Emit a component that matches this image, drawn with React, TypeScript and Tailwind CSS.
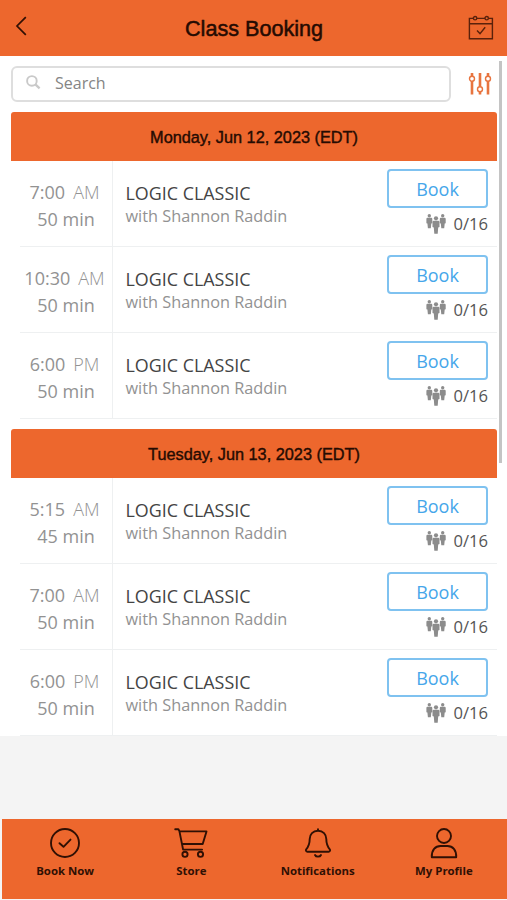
import type { ReactNode } from "react";

interface ClassSlot {
  time: string;
  period: string;
  duration: string;
}

interface DayProps {
  title: string;
  slots: ClassSlot[];
  className?: string;
}

const MONDAY: ClassSlot[] = [
  { time: "7:00", period: "AM", duration: "50 min" },
  { time: "10:30", period: "AM", duration: "50 min" },
  { time: "6:00", period: "PM", duration: "50 min" },
];

const TUESDAY: ClassSlot[] = [
  { time: "5:15", period: "AM", duration: "45 min" },
  { time: "7:00", period: "AM", duration: "50 min" },
  { time: "6:00", period: "PM", duration: "50 min" },
];

function BackIcon() {
  return (
    <svg width="12" height="20" viewBox="0 0 12 20" fill="none" stroke="#301004" strokeWidth="1.7">
      <path d="M10.8 1.2 2 10l8.8 8.8" />
    </svg>
  );
}

function CalendarIcon() {
  return (
    <svg width="26" height="26" viewBox="0 0 26 26" fill="none" stroke="#5a210b" strokeWidth="1.4">
      <path d="M5.2 3.4H1.4v20.4h23V3.4h-3.8M9 3.4h8M1.4 8.7h23" />
      <circle cx="7.1" cy="3.2" r="1.7" />
      <circle cx="18.7" cy="3.2" r="1.7" />
      <path d="m9 15.6 3 3 5.2-6.4" />
    </svg>
  );
}

function SearchIcon() {
  return (
    <svg width="15" height="15" viewBox="0 0 15 15" fill="none" stroke="#c9c9c9">
      <circle cx="5.9" cy="5.9" r="4.8" strokeWidth="1.9" />
      <path d="m9.4 9.4 4.2 4" strokeWidth="2.3" />
    </svg>
  );
}

function FilterIcon() {
  return (
    <svg width="24" height="24" viewBox="0 0 24 24" fill="none" stroke="#e8743f">
      <path d="M4 1v3.5M4 9v13.5M12 1v13.8M12 19.5v3M20 1v3.5M20 9v13.5" strokeWidth="2.6" />
      <g strokeWidth="1.4">
        <circle cx="4" cy="6.8" r="2.5" />
        <circle cx="12" cy="17.2" r="2.5" />
        <circle cx="20" cy="6.8" r="2.5" />
      </g>
    </svg>
  );
}

function PeopleIcon() {
  return (
    <svg width="20" height="20" viewBox="0 0 20 20" fill="#8c8c8c">
      <circle cx="3.3" cy="1.7" r="1.7" />
      <path d="M1.4 3.8h3.8q1.1 0 1.1 1.1v4.4l-1 .3-.5 4.700H1.900L1.400 9.600l-1-.3V4.900q0-1.100 1-1.100Z" />
      <circle cx="16.7" cy="1.7" r="1.7" />
      <path d="M14.800 3.800h3.800q1.100 0 1.100 1.100v4.400l-1 .3-.5 4.700h-2.900l-.5-4.700-1-.3V4.900q0-1.100 1-1.100Z" />
      <circle cx="10" cy="4.300" r="2.100" />
      <path d="M7.800 6.700h4.400q1.300 0 1.300 1.300v5l-1.300.4-.5 6.400H8.300l-.5-6.400-1.300-.4V8q0-1.300 1.300-1.300Z" />
    </svg>
  );
}

function NavItem({ label, children }: { label: string; children: ReactNode }) {
  return (
    <button className="flex w-[126.5px] flex-col items-center pt-[9px]">
      <svg width="34" height="32" viewBox="0 0 34 32" fill="none" stroke="#301004" strokeWidth="1.9" strokeLinecap="round" strokeLinejoin="round">
        {children}
      </svg>
      <span className="mt-[3px] text-[11.4px] leading-4 font-bold whitespace-nowrap">{label}</span>
    </button>
  );
}

function SlotRow({ slot }: { slot: ClassSlot }) {
  return (
    <div className="flex h-[86px] bg-white">
      <div className="ml-[9px] flex w-[93px] flex-col items-center border-r border-b border-[#eef0f1] pt-[18px] pr-[3px] text-[18px] leading-[27px] text-[#929292]">
        <div className="flex gap-2 whitespace-nowrap">
          <span>{slot.time}</span>
          <span className="font-light">{slot.period}</span>
        </div>
        <div className="pl-[3px]">{slot.duration}</div>
      </div>
      <div className="flex-1 border-b border-[#eef0f1] pt-[20px] pl-[12.5px]">
        <div className="text-[17.9px] leading-6 text-[#444]">LOGIC CLASSIC</div>
        <div className="text-[16.3px] leading-[22px] text-[#929292]">with Shannon Raddin</div>
      </div>
      <div className="flex w-[111px] flex-col items-end border-b border-[#eef0f1] pt-[8px] pr-[9px]">
        <button className="h-[39px] w-[101px] rounded-[4px] border-2 border-[#7fc2f0] text-[18px] leading-none text-[#45a6ea]">
          Book
        </button>
        <div className="mt-[4px] flex items-center gap-[7px] text-[16.6px] leading-6 text-[#555]">
          <PeopleIcon />
          <span>0/16</span>
        </div>
      </div>
    </div>
  );
}

function DaySection({ title, slots, className = "" }: DayProps) {
  return (
    <section className={className}>
      <h2 className="flex items-center justify-center rounded-t-[3px] bg-[#ed672d] pt-[13px] pb-[12px] font-['Liberation_Sans'] text-[16.3px] leading-6 text-[#250b02] [-webkit-text-stroke:0.4px_#250b02]">
        {title}
      </h2>
      {slots.map((s) => (
        <SlotRow key={s.time} slot={s} />
      ))}
    </section>
  );
}

export default function App() {
  return (
    <div className="flex h-[900px] w-[507px] flex-col overflow-hidden bg-[#f4f4f4] font-['Open_Sans',sans-serif]">
      <header className="flex h-[56px] shrink-0 items-start justify-between bg-[#ed672d] pr-[13px] pl-[15px]">
        <button className="mt-[16px] w-[26px]">
          <BackIcon />
        </button>
        <h1 className="mt-[15px] -ml-px font-['Liberation_Sans'] text-[21.6px] leading-7 text-[#250b02] [-webkit-text-stroke:0.5px_#250b02]">
          Class Booking
        </h1>
        <button className="mt-[15px]">
          <CalendarIcon />
        </button>
      </header>

      <main className="relative h-[680px] shrink-0 bg-white pt-[10px] pr-[10px] pl-[11px]">
        {/* Search */}
        <div className="flex h-[35px] items-center justify-between">
          <div className="flex h-[36px] w-[440px] items-center gap-[14px] rounded-[6px] border-2 border-[#dedede] pb-[2px] pl-[13px] text-[16px] text-[#858585]">
            <SearchIcon />
            <span>Search</span>
          </div>
          <button className="mr-[5px]">
            <FilterIcon />
          </button>
        </div>

        <DaySection title="Monday, Jun 12, 2023 (EDT)" slots={MONDAY} className="mt-[11px]" />
        <DaySection title="Tuesday, Jun 13, 2023 (EDT)" slots={TUESDAY} className="mt-[10px]" />

        {/* Scroll thumb */}
        <div className="absolute top-[5px] right-[5px] h-[402px] w-[3px] bg-[#c4c4c4]" />
      </main>

      {/* Tab bar */}
      <nav className="mt-auto mb-[1px] ml-[2px] flex h-[80px] shrink-0 bg-[#ed672d] text-[#301004]">
        <NavItem label="Book Now">
          <circle cx="17" cy="15" r="14" />
          <path d="m11.5 15.2 4 3.6 7-7.2" />
        </NavItem>
        <NavItem label="Store">
          <path d="M1.2 1.3h3.2l1 1.8 3.700 18.500h19M5.500 3.400h27l-3.800 12.600H8.200" />
          <circle cx="11" cy="26.3" r="2.6" />
          <circle cx="26.5" cy="26.3" r="2.6" />
        </NavItem>
        <NavItem label="Notifications">
          <path d="M17 1.2v1.500M17 2.700c-5 0-8.300 3.500-8.300 8.300 0 5.500-1.500 8-3.500 10.300-.8 1 0 2.400 1.200 2.400h21.200c1.200 0 2-1.400 1.200-2.400-2-2.300-3.500-4.800-3.500-10.300 0-4.800-3.300-8.300-8.300-8.300ZM14 27c1 2.200 5 2.200 6 0" />
        </NavItem>
        <NavItem label="My Profile">
          <circle cx="17" cy="8" r="7" />
          <path d="M4.8 29.2c-.3-7.200 3.500-11.200 8.700-11.200h7c5.200 0 9 4 8.700 11.200Z" />
        </NavItem>
      </nav>
    </div>
  );
}
